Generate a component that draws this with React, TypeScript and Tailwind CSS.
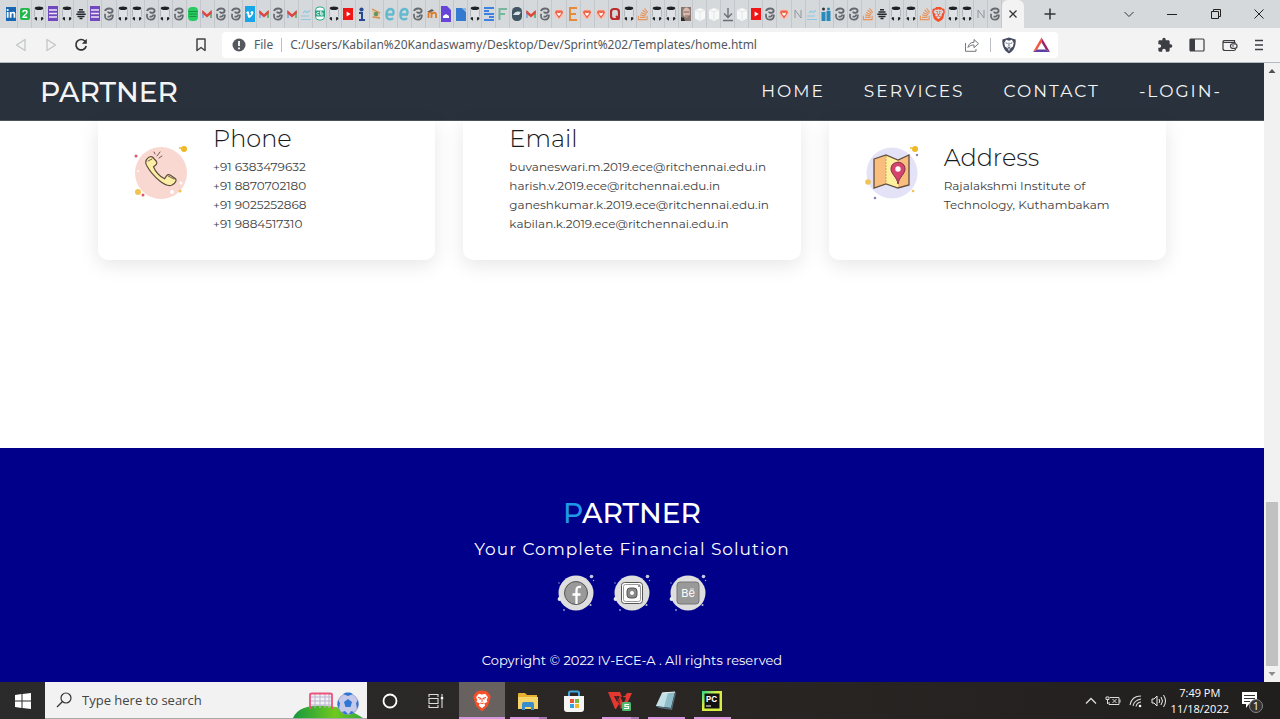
import React from "react";
import { SiBrave } from "react-icons/si";
import { FaStackOverflow, FaVimeoV, FaLinkedinIn } from "react-icons/fa";
import { MdExtension } from "react-icons/md";

type TabKind =
  | "in" | "two" | "cat" | "form" | "dots" | "swirl" | "spot" | "mail" | "vimeo" | "cloud" | "cb" | "play"
  | "info" | "eye" | "edge" | "moodle" | "pdoc" | "bdoc" | "s" | "f" | "orb" | "lion" | "lionLight" | "e"
  | "q" | "so" | "face" | "box" | "down" | "n" | "ii";

const TABS: TabKind[] = [
  "in", "two", "cat", "form", "cat", "dots", "form", "swirl", "cat", "cat", "swirl", "cat", "swirl", "spot",
  "mail", "swirl", "swirl", "vimeo", "mail", "swirl", "mail", "cloud", "cb", "cat", "play", "info", "eye",
  "edge", "edge", "swirl", "moodle", "pdoc", "bdoc", "cat", "s", "f", "orb", "mail", "swirl", "lionLight",
  "e", "lionLight", "lionLight", "q", "cat", "so", "cat", "cat", "face", "box", "box", "down", "box", "play",
  "swirl", "lionLight", "n", "cloud", "ii", "swirl", "swirl", "so", "dots", "cat", "cat", "so", "lion",
  "cat", "cat", "n", "swirl",
];

function Favicon({ kind }: { kind: TabKind }) {
  const frame = (children: React.ReactNode) => (
    <svg viewBox="0 0 10 16" className="h-4 w-2.5 shrink-0" aria-hidden="true">{children}</svg>
  );
  switch (kind) {
    case "in":
      return <span className="flex h-3.5 w-2.5 items-center justify-center bg-[#1767b3] text-white"><FaLinkedinIn size={10} /></span>;
    case "vimeo":
      return <span className="flex h-4 w-2.5 items-center justify-center bg-[#17a6e8] text-white"><FaVimeoV size={9} /></span>;
    case "so":
      return <FaStackOverflow size={14} className="shrink-0 text-[#e8935a]" />;
    case "lion":
      return <SiBrave size={15} className="shrink-0 text-[#f4502a]" />;
    case "two":
      return frame(<><rect y="2" width="10" height="12" rx="2" fill="#22b84b" /><path d="M3 6.2C3 4 7 4 7 6.2S3 9.5 3 11.2h4.2" fill="none" stroke="#fff" strokeWidth="1.4" /></>);
    case "cat":
      return frame(<><path d="M.6 3.500v7M9.400 3.500v7" stroke="#a5aaae" strokeWidth=".8" /><rect x="1.200" y="3" width="7.600" height="8" fill="#dfe2e5" /><ellipse cx="5" cy="2.300" rx="4.300" ry="1.800" fill="#1e2226" /><path d="M1 11.300h2v3.500L.5 13ZM7 11.300h2l.5 1.700L7 14.800Z" fill="#1e2226" /></>);
    case "form":
      return frame(<><rect width="10" height="15" fill="#7248bd" /><path d="M1 4h8M1 7.5h8M1 11h8" stroke="#eee5fa" strokeWidth="1.5" /></>);
    case "dots":
      return frame(<path d="M3 3.800h4M1.500 6h7M.3 8.200h9.400M1.500 10.400h7M3.500 12.600h3" stroke="#22272b" strokeWidth="1.500" />);
    case "swirl":
      return frame(<><path d="M1 5C1.800 1.800 8.800 1.500 8.600 4.800 8.500 7.500 4 7.500 4.200 5.500" fill="none" stroke="#65696e" strokeWidth="1.900" /><path d="M1.200 7.800C.2 12.500 2.500 13.800 5 13.700S9.200 12 8.800 8.500M3.500 10.500C5 11 7 10.500 7.500 8.500" fill="none" stroke="#65696e" strokeWidth="1.700" /></>);
    case "spot":
      return frame(<><rect y="1" width="10" height="14" rx="4" fill="#28cb61" /><path d="M.5 5.5h9M1 8h8M1.5 10.5h7" stroke="#159343" /></>);
    case "mail":
      return frame(<><path d="M1 5v7" stroke="#86ace5" strokeWidth="1.8" /><path d="M9 5v7" stroke="#60b079" strokeWidth="1.8" /><path d="m.3 4 4.7 4.2L9.7 4v3.5L5 11.5.3 7.5Z" fill="#df473d" /></>);
    case "cloud":
      return frame(<path d="M0 10h8M0 13.5h10M2 7l2-2 2 1.5 3-2" fill="none" stroke="#91c8e5" strokeWidth="1.2" />);
    case "cb":
      return frame(<><rect x=".5" y="1" width="9" height="13" rx="3.5" fill="#fff" stroke="#2aa982" /><rect y="4.5" width="10" height="6" fill="#24a882" /><path d="M4.2 6.5C1 5.5 1 9.8 4.2 8.8M5.8 5v4c3 .8 3-2.8 0-2" fill="none" stroke="#fff" /></>);
    case "play":
      return frame(<><rect y="2" width="10" height="12" fill="#f01616" /><path d="m3.6 5.5 4 2.5-4 2.5Z" fill="#fff" /></>);
    case "info":
      return frame(<><circle cx="4.5" cy="3.5" r="2.1" fill="#244a93" /><path d="M2 7h3v7M2 14h6" fill="none" stroke="#244a93" strokeWidth="2" /></>);
    case "eye":
      return frame(<><path d="M1 2.500 9 6 8 13 2 11Z" fill="#dfc5a5" /><path d="M1 3 9 7M1.500 11 9 12" stroke="#d8904e" strokeWidth="1.3" /><circle cx="5" cy="8" r="2.200" fill="#63965b" /></>);
    case "edge":
      return frame(<path d="M2.500 8.500h5.500C9.500 5 7.500 2.500 5 3S1.200 6 1.500 10s5 4 6.500 2" fill="none" stroke="#63b9ce" strokeWidth="2.400" />);
    case "moodle":
      return frame(<><path d="M1.5 12V7.5c1-2 3-1.500 3 .5v4M5 8c1-2 4-1.500 4 .5V12" fill="none" stroke="#dc7d2d" strokeWidth="1.8" /><path d="m0 6 5-3 2 2-5 1Z" fill="#555" /></>);
    case "pdoc":
      return frame(<><path d="M0 0h6l4 4v12H0Z" fill="#6546d8" /><path d="M2 12v-2l3-2 3 2v2Z" fill="#fff" /></>);
    case "bdoc":
      return frame(<><path d="M0 2h6l4 4v9H0Z" fill="#337bd0" /><path d="m6 2 4 4V2Z" fill="#8cb6e8" /></>);
    case "s":
      return frame(<path d="M0 2h10M0 5h5M0 8h10M5 11h5M0 14h10" stroke="#3d82e3" strokeWidth="2" />);
    case "f":
      return frame(<path d="M1.5 14V3H9M1.500 8H7" fill="none" stroke="#79b79c" strokeWidth="2" />);
    case "orb":
      return frame(<><rect y="1" width="10" height="14" rx="4.5" fill="#405663" /><path d="M1 9c2-4 5-4 8-3L7 9Z" fill="#dbe5e9" /></>);
    case "lionLight":
      return frame(<><circle cx="5" cy="8" r="5" fill="#f2c8bd" /><path d="M1.800 4.500h6.400l.8 2.300L5 12.500 1 6.800Z" fill="#ee6247" /><path d="m3 6.500 2 .8 2-.8-.5 2L5 10 3.500 8.500Z" fill="#fff" /></>);
    case "e":
      return frame(<path d="M9 2H2v12h7M2 8h6" fill="none" stroke="#e58b3a" strokeWidth="2" />);
    case "q":
      return frame(<><rect x="1" y="3" width="8" height="10" rx="3" fill="none" stroke="#b92b2d" strokeWidth="2.2" /><path d="m6 10 3.500 3.500" stroke="#b92b2d" strokeWidth="2" /></>);
    case "face":
      return frame(<><rect y="1" width="10" height="14" fill="#86766f" /><ellipse cx="5.500" cy="6.500" rx="3.700" ry="5" fill="#dab8ae" /><path d="M2.500 6h6M4 10h4" stroke="#6d5b55" strokeWidth=".9" /><path d="M0 15v-4l3 1 1 3Z" fill="#282b2c" /></>);
    case "box":
      return frame(<><path d="m0 4 5-2 5 2v8.500L5 15l-5-2.500Z" fill="#f7f8f8" /><path d="m0 4 5 2 5-2M5 6v8" fill="none" stroke="#dce0e2" strokeWidth=".7" /></>);
    case "down":
      return frame(<path d="M5 2v9M1 7.500l4 4 4-4M0 14.500h10" fill="none" stroke="#697078" strokeWidth="1.400" />);
    case "n":
      return frame(<path d="M2 12V4l6 8V4" fill="none" stroke="#8f969b" />);
    case "ii":
      return frame(<><path d="M2.500 6v9M7.500 5v10" stroke="#278abb" strokeWidth="4" /><circle cx="2.500" cy="3" r="1.500" fill="#333" /><circle cx="7.500" cy="3" r="1.500" fill="#278abb" /></>);
  }
}

function TabStrip() {
  return (
    <div className="flex h-7 items-end bg-[#d5d9dc] pl-1">
      <div className="flex min-w-0 flex-[998] items-center">
        {TABS.map((kind, i) => (
          <button key={i} type="button" aria-label={`Tab ${i + 1}`} className="flex h-7 min-w-0 flex-1 items-center justify-center overflow-hidden border-r border-[#c4c8cc]">
            <Favicon kind={kind} />
          </button>
        ))}
      </div>
      <button type="button" aria-label="Close tab" className="flex h-7 w-[22px] items-center justify-center rounded-t-md bg-[#f3f3f3]">
        <svg viewBox="0 0 8 8" className="size-2"><path d="m.5.5 7 7m0-7-7 7" stroke="#333" strokeWidth="1.300" /></svg>
      </button>
      <div className="flex h-7 flex-[256] items-center">
        <button type="button" aria-label="New tab" className="flex w-[52px] justify-center">
          <svg viewBox="0 0 12 12" className="size-3"><path d="M6 .5v11M.5 6h11" stroke="#333" strokeWidth="1.500" /></svg>
        </button>
        <div className="flex flex-1 justify-between pr-4 pl-12">
          <button type="button" aria-label="Search tabs"><svg viewBox="0 0 10 10" className="size-2.5"><path d="m.5 3 4.500 4.500L9.500 3" fill="none" stroke="#333" /></svg></button>
          <button type="button" aria-label="Minimize"><svg viewBox="0 0 10 10" className="size-2.5"><path d="M0 5.500h10" stroke="#222" /></svg></button>
          <button type="button" aria-label="Restore"><svg viewBox="0 0 10 10" className="size-2.5"><path d="M.5 2.500h7v7h-7ZM2.500 2.500v-2h7v7h-2" fill="none" stroke="#222" /></svg></button>
          <button type="button" aria-label="Close window"><svg viewBox="0 0 10 10" className="size-2.5"><path d="m.5.5 9 9m0-9-9 9" stroke="#222" /></svg></button>
        </div>
      </div>
    </div>
  );
}

function Toolbar() {
  return (
    <div className="flex h-[35px] items-center border-b border-[#b4bac1] bg-[#f3f3f3] pr-4 pl-[15px]">
      <div className="flex w-[73px] items-center justify-between">
        <button type="button" aria-label="Back"><svg viewBox="0 0 12 14" className="h-3.5 w-3"><path d="M10 1.500v11L1.500 7Z" fill="none" stroke="#c3c5c7" strokeWidth="1.300" strokeLinejoin="round" /></svg></button>
        <button type="button" aria-label="Forward"><svg viewBox="0 0 12 14" className="h-3.5 w-3"><path d="M2 1.500v11L10.500 7Z" fill="none" stroke="#c3c5c7" strokeWidth="1.300" strokeLinejoin="round" /></svg></button>
        <button type="button" aria-label="Reload"><svg viewBox="0 0 14 14" className="size-3.5"><path d="M11 3.200A5.200 5.200 0 1 0 12.200 8" fill="none" stroke="#333" strokeWidth="1.700" /><path d="M12.800.8v5H7.900Z" fill="#333" /></svg></button>
      </div>
      <button type="button" aria-label="Bookmark" className="ml-[108px]"><svg viewBox="0 0 10 14" className="h-3.5 w-2.5"><path d="M1 1h8v11.500L5 9.500l-4 3Z" fill="none" stroke="#444" strokeWidth="1.500" strokeLinejoin="round" /></svg></button>
      <div className="ml-4 flex h-[26px] flex-1 items-center rounded bg-white pr-2 pl-2.5 font-['Noto_Sans',sans-serif] text-xs text-[#54585d]">
        <svg viewBox="0 0 14 14" className="size-3.5"><circle cx="7" cy="7" r="6.500" fill="#55595f" /><path d="M7 3v5M7 9.500v1.700" stroke="#fff" strokeWidth="1.800" /></svg>
        <span className="ml-2">File</span>
        <span className="mx-2 h-3.5 w-px bg-[#babdc1]" />
        <input aria-label="Address bar" readOnly value="C:/Users/Kabilan%20Kandaswamy/Desktop/Dev/Sprint%202/Templates/home.html" className="min-w-0 flex-1 bg-transparent outline-none" />
        <button type="button" aria-label="Share"><svg viewBox="0 0 16 14" className="h-3.5 w-4"><path d="M1.500 5v8.300h10.500V11" fill="none" stroke="#74777b" /><path d="M4 9.500C4.500 6 7 4.300 10 4.300V1.500l4.500 4.200L10 9.700V7C7.500 7 5.500 7.500 4 9.500Z" fill="none" stroke="#74777b" strokeLinejoin="round" /></svg></button>
        <span className="mx-2.5 h-3.5 w-px bg-[#babdc1]" />
        <button type="button" aria-label="Brave shields">
          <svg viewBox="0 0 16 18" className="h-[17px] w-4"><path d="M8 .5 15 2.700c.5 6-1.500 12-7 14.800C2.500 14.700.5 8.700 1 2.700Z" fill="#464b60" /><path d="m5 3 3 1 3-1 2 3-.8 4L9.500 12 8 15l-1.500-3-2.700-2L3 6Z" fill="#fff" /><path d="m4.500 6 2 1m5-1-2 1M8 6v4m-1.500.5 1.500.8 1.500-.8m-2.500 2h2" fill="none" stroke="#464b60" strokeWidth=".9" /></svg>
        </button>
        <button type="button" aria-label="Rewards" className="ml-4">
          <svg viewBox="0 0 18 16" className="h-4 w-[17px]"><path d="M9 0 0 15.500l4.500-2.700L9 5Z" fill="#f1573f" /><path d="m9 0 9 15.500-4.500-2.700L9 5Z" fill="#9b216b" /><path d="M0 15.500h18l-4.500-2.700h-9Z" fill="#5c3f9e" /></svg>
        </button>
      </div>
      <div className="ml-[99px] flex w-[107px] items-center justify-between text-[#3c3e43]">
        <button type="button" aria-label="Extensions"><MdExtension size={16} /></button>
        <button type="button" aria-label="Side panel"><svg viewBox="0 0 16 14" className="h-3.5 w-4"><rect x="1" y="1" width="14" height="12" rx="1" fill="none" stroke="currentColor" strokeWidth="1.200" /><path d="M1 1h5v12H1Z" fill="currentColor" /></svg></button>
        <button type="button" aria-label="Wallet"><svg viewBox="0 0 16 14" className="h-3.5 w-4"><path d="M12.500 4V2.500h-10a1.500 1.500 0 0 0-1.500 1v7C1 12 1.700 12.500 3 12.500h8.500c1.300 0 2-.5 2-1.500M1.500 4.300H12c1 0 1.500.4 1.500 1.200" fill="none" stroke="currentColor" strokeWidth="1.200" /><rect x="8.500" y="5.800" width="6.500" height="4.500" rx="2" fill="#f3f3f3" stroke="currentColor" strokeWidth="1.200" /><circle cx="11" cy="8" r=".8" fill="currentColor" /></svg></button>
        <button type="button" aria-label="Menu"><svg viewBox="0 0 10 12" className="h-3 w-2.5"><path d="M1 1.500h8M1 6h8M1 10.500h8" stroke="currentColor" strokeWidth="1.300" /></svg></button>
      </div>
    </div>
  );
}

function PhoneArt() {
  return (
    <svg viewBox="0 0 56 56" className="size-14 shrink-0" aria-hidden="true">
      <circle cx="28" cy="29" r="26" fill="#f8d8d0" />
      <circle cx="51" cy="5" r="3" fill="#efb825" /><circle cx="47" cy="4" r="1" fill="#efb825" />
      <circle cx="3" cy="12" r="1.500" fill="#e0566c" /><circle cx="5" cy="48" r="3" fill="#f1c351" />
      <circle cx="10" cy="51" r="1.500" fill="#e0566c" /><circle cx="47" cy="47" r="1.600" fill="#f1c351" />
      <circle cx="39" cy="48" r="2" fill="#fff" /><circle cx="48" cy="39" r="1.500" fill="#fff" /><circle cx="5" cy="27" r="1" fill="#fff" />
      <path d="M14 15c2-2.500 4.500-3 6-1.500l3.500 4c1 1.500.2 2.800-2 4.500l-1 .8c2 5 6 9.500 11 12l2-3c1.300-1.500 2.500-1.500 4-.5l5 3.500c1.700 1.500-.2 4.500-4 6.500-3 1-7-.5-12-4.500-6-5-10-10-13-15.500-1.500-3-1-4.500.5-6.300Z" fill="#fdeea5" stroke="#604e3e" strokeWidth="1.200" strokeLinejoin="round" />
      <path d="m15 17 4-2m16 17 6 3M22 10l-1-2m3 4 3-4m-1 6 3-2" fill="none" stroke="#7b5b57" strokeLinecap="round" />
    </svg>
  );
}

function MapArt() {
  return (
    <svg viewBox="0 0 56 56" className="size-14 shrink-0" aria-hidden="true">
      <circle cx="28" cy="29" r="25.500" fill="#e3e2f6" />
      <circle cx="51" cy="5" r="3" fill="#efb825" /><circle cx="47" cy="4" r="1" fill="#efb825" /><circle cx="53" cy="11" r="1.200" fill="#8b81ba" />
      <circle cx="4" cy="38" r="2.800" fill="#f1c351" /><circle cx="11" cy="54" r="1.300" fill="#8b81ba" /><circle cx="49" cy="47" r="1.300" fill="#f1c351" />
      <path d="m10 15 12-4v29l-12 4Z" fill="#f9bd7e" /><path d="m22 11 12 5v28l-12-4Z" fill="#fff09f" /><path d="m34 16 11-5v30l-11 3Z" fill="#f9bd7e" />
      <path d="m10 15 12-4 12 5 11-5v30l-11 3-12-4-12 4Z" fill="none" stroke="#604e3e" strokeWidth="1.300" /><path d="M22 12v27" stroke="#c5a55e" strokeDasharray="2 1" />
      <path d="M34 40C33 33 27 30 27 25c0-9 14-9 14 0 0 5-6 8-7 15Z" fill="#d4446d" stroke="#7c3048" /><circle cx="34" cy="25" r="2.700" fill="#fff" />
    </svg>
  );
}

function ContactCard({ art, title, lines, wide }: { art?: React.ReactNode; title: string; lines: string[]; wide?: boolean }) {
  return (
    <article className={`flex min-w-0 items-center rounded-b-[10px] bg-white pb-[27px] shadow-[0_5px_20px_rgba(0,0,0,0.1)] ${wide ? "pl-[46px]" : "pl-[35px]"}`}>
      {art && <div className="mr-6 pb-2.5">{art}</div>}
      <div className="min-w-0">
        <h2 className="text-2xl leading-9 font-light text-[#17191b]">{title}</h2>
        {lines.map((line) => (
          <p key={line} className="text-[12px] leading-[19px] whitespace-nowrap text-[#3c3e42]">{line}</p>
        ))}
      </div>
    </article>
  );
}

function SocialArt({ kind }: { kind: "facebook" | "instagram" | "behance" }) {
  return (
    <svg viewBox="0 0 40 40" className="size-10" aria-hidden="true">
      <circle cx="20" cy="21" r="17.500" fill="#dedede" />
      <circle cx="35.500" cy="4.500" r="1.800" fill="#c8c9df" /><circle cx="37.500" cy="8.500" r=".7" fill="#aeb0d5" /><circle cx="3" cy="11" r=".8" fill="#8f91c0" />
      <circle cx="3.500" cy="27" r="1.900" fill="#e7e7ef" /><circle cx="8" cy="38" r="1" fill="#8f91c0" /><circle cx="34.500" cy="33" r="1.100" fill="#b7b8d4" />
      {kind === "facebook" && <><circle cx="20" cy="21" r="11.500" fill="#999" stroke="#555" /><path d="M20.500 32V18.500c0-3 1.500-4 4.500-3.500M16.500 22.500h8" fill="none" stroke="#fff" strokeWidth="2.300" /></>}
      {kind === "instagram" && <><rect x="9.500" y="10.500" width="21" height="21" rx="3" fill="#fff" stroke="#555" /><rect x="11.500" y="12.500" width="17" height="17" rx="2" fill="none" stroke="#999" /><rect x="15" y="16" width="10" height="10" rx="3" fill="#888" stroke="#555" /><circle cx="20" cy="21" r="2" fill="#fff" /><circle cx="27" cy="14" r="1" fill="#777" /></>}
      {kind === "behance" && <><rect x="9" y="10" width="22" height="22" rx="3" fill="#999" stroke="#777" /><text x="20" y="25" textAnchor="middle" fontFamily="Inter, sans-serif" fontSize="11" fill="#fff">Be</text><path d="M22 17h4" stroke="#eee" strokeWidth=".8" /></>}
    </svg>
  );
}

const NAV = ["HOME", "SERVICES", "CONTACT", "-LOGIN-"];

function Site() {
  return (
    <div className="flex min-w-0 flex-1 flex-col bg-white font-['Montserrat','Inter',sans-serif]">
      <header className="flex h-[58px] items-center justify-between border-b border-[#4b535b] bg-[#29313d] pr-[42px] pl-10 text-[#f4f4f4]">
        <a href="#home" className="text-[28px] leading-none font-medium">PARTNER</a>
        <nav aria-label="Main" className="flex gap-[39px] text-[17px] tracking-[2px]">
          {NAV.map((item) => <a key={item} href={`#${item.replaceAll("-", "").toLowerCase()}`}>{item}</a>)}
        </nav>
      </header>
      <main className="flex-1 px-[98px]">
        <section aria-label="Contact" className="grid grid-cols-3 gap-7">
          <ContactCard art={<PhoneArt />} title="Phone" lines={["+91 6383479632", "+91 8870702180", "+91 9025252868", "+91 9884517310"]} />
          <ContactCard wide title="Email" lines={["buvaneswari.m.2019.ece@ritchennai.edu.in", "harish.v.2019.ece@ritchennai.edu.in", "ganeshkumar.k.2019.ece@ritchennai.edu.in", "kabilan.k.2019.ece@ritchennai.edu.in"]} />
          <ContactCard art={<MapArt />} title="Address" lines={["Rajalakshmi Institute of", "Technology, Kuthambakam"]} />
        </section>
      </main>
      <footer className="flex flex-col items-center bg-[#00008b] pt-[49px] pb-3 text-white">
        <p className="text-[28px] leading-8 font-medium"><span className="text-[#1f98e6]">P</span>ARTNER</p>
        <p className="mt-2 text-[17px] leading-6 tracking-[1px]">Your Complete Financial Solution</p>
        <div className="mt-[11px] flex gap-4">
          <a href="#facebook" aria-label="Facebook"><SocialArt kind="facebook" /></a>
          <a href="#instagram" aria-label="Instagram"><SocialArt kind="instagram" /></a>
          <a href="#behance" aria-label="Behance"><SocialArt kind="behance" /></a>
        </div>
        <p className="mt-[38px] text-[13px] leading-5">Copyright © 2022 IV-ECE-A . All rights reserved</p>
      </footer>
    </div>
  );
}

function Scrollbar() {
  return (
    <div className="flex w-4 flex-col items-center bg-[#f1f1f1]" aria-hidden="true">
      <svg viewBox="0 0 16 16" className="size-4"><path d="m4.500 10 3.500-4 3.500 4Z" fill="#505050" /></svg>
      <div className="flex-[423]" />
      <div className="w-3 flex-[164] bg-[#c1c1c1]" />
      <svg viewBox="0 0 16 16" className="size-4"><path d="m4.500 6 3.500 4 3.500-4Z" fill="#8b8b8b" /></svg>
    </div>
  );
}

function TaskButton({ label, children, line, active, split }: { label: string; children: React.ReactNode; line?: boolean; active?: boolean; split?: boolean }) {
  return (
    <button type="button" aria-label={label} className={`flex h-full w-[46px] flex-col items-center ${active ? "bg-[#67615f]" : ""}`}>
      <span className="flex flex-1 items-center pt-0.5">{children}</span>
      <span className={`flex h-0.5 ${active ? "w-full" : "w-[37px]"} ${line ? "bg-[#d897df]" : ""}`}>
        {split && <span className="ml-auto w-2 bg-[#a878b2]" />}
      </span>
    </button>
  );
}

function Taskbar() {
  return (
    <div className="flex h-[37px] items-stretch bg-linear-to-r from-[#2b2b2c] via-[#2a2624] to-[#211f1e] text-white">
      <button type="button" aria-label="Start" className="flex w-[45px] items-center justify-center">
        <svg viewBox="0 0 16 16" className="size-4"><path d="m0 2 6.500-1v6.500H0Zm7.500-1L16 0v7.500H7.500ZM0 8.500h6.500V15L0 14Zm7.500 0H16V16l-8.500-1Z" fill="#fff" /></svg>
      </button>
      <div className="flex w-[322px] items-center border-b border-[#aaa] bg-[#f2f2f2] pl-[11px]">
        <svg viewBox="0 0 16 16" className="size-4" aria-hidden="true"><circle cx="10" cy="6" r="5" fill="none" stroke="#333" strokeWidth="1.200" /><path d="M6.500 9.500 1 15" stroke="#333" strokeWidth="1.300" /></svg>
        <input aria-label="Search" placeholder="Type here to search" className="ml-2.5 min-w-0 flex-1 bg-transparent pt-0.5 text-[13px] outline-none placeholder:text-[#444]" />
        <svg viewBox="0 0 74 36" className="h-9 w-[74px]" aria-hidden="true">
          <defs><linearGradient id="hill"><stop stopColor="#16983f" /><stop offset=".6" stopColor="#70c91e" /><stop offset="1" stopColor="#33a83c" /></linearGradient></defs>
          <path d="M0 36c5-12 20-13 34-12 15 1 25 5 36 12Z" fill="url(#hill)" />
          <path d="M18 15h20M18 19h20M18 23h20M22 12v14M27 12v14M32 12v14M36 12v14" stroke="#b9b4d4" />
          <path d="M17 27V13q0-1.500 2-1.500h18q2 0 2 1.500v14" fill="none" stroke="#e9547c" strokeWidth="1.800" />
          <circle cx="55" cy="22" r="10.500" fill="#c5c9ea" stroke="#8388bb" strokeWidth=".6" />
          <path d="m55 17 4 3-1.500 5h-5L51 20ZM50 12l5 2 5-2-3-1.500h-4ZM45 18l2 3-1 6-1.500-4ZM65 18l-2 3 1 6 1.500-4ZM49 30l3-1 3 3-3 .3Zm12 0-3-1-2 3h3Z" fill="#3176d4" />
        </svg>
      </div>
      <div className="flex flex-1">
        <TaskButton label="Cortana"><svg viewBox="0 0 16 16" className="size-4"><circle cx="8" cy="8" r="6.500" fill="none" stroke="#fff" strokeWidth="1.800" /></svg></TaskButton>
        <TaskButton label="Task view"><svg viewBox="0 0 16 16" className="size-4"><path d="M1 4V1.500h9V4M1 12v2.500h9V12M1 5.500h9v5H1ZM14 1v3M14 7v8" fill="none" stroke="#ddd" strokeWidth="1.100" /><path d="M12.800 4h2.400v2.500h-2.400Z" fill="#fff" /></svg></TaskButton>
        <TaskButton label="Brave" line active>
          <svg viewBox="0 0 20 24" className="h-[22px] w-5"><path d="m6 1 4-.5L14 1l2.500 1.500 1.500 2 1.500 2-.5 3-2.500 8L10 23.500l-6.500-6-2.500-8-.5-3L2 4.500l1.500-2Z" fill="#f4502a" /><path d="m6.500 4 3.500 1 3.500-1 3 4-1.500 3 1 2-3.500 1.500 1 2.500-3.500 3-3.500-3 1-2.500L4 13l1-2-1.500-3Z" fill="#fff" /><path d="m5.500 8 3 1-1 1.500m7-2.500-3 1 1 1.500M10 9v4m-2 1 2 1 2-1" fill="none" stroke="#f4502a" strokeWidth="1.100" /></svg>
        </TaskButton>
        <TaskButton label="File Explorer" line split><svg viewBox="0 0 20 18" className="h-[18px] w-5"><path d="M0 2q0-1 1-1h6l2 2h10v14H0Z" fill="#e8b130" /><path d="M0 5h20v12H0Z" fill="#f8d569" /><path d="M4 18v-6q0-2 2-2h8q2 0 2 2v6h-3v-3H7v3Z" fill="#388fcc" /></svg></TaskButton>
        <TaskButton label="Store"><svg viewBox="0 0 22 22" className="size-[22px]"><path d="M6 7V3q0-1.500 1.500-1.500h7Q16 1.500 16 3v4" fill="none" stroke="#3fa7dd" strokeWidth="2" /><path d="M1 6h20v13q0 3-3 3H4q-3 0-3-3Z" fill="#f5f5f5" /><path d="M7 9h4v4H7Z" fill="#e75434" /><path d="M12 9h4v4h-4Z" fill="#78b83b" /><path d="M7 14h4v4H7Z" fill="#35a1df" /><path d="M12 14h4v4h-4Z" fill="#f2b72e" /></svg></TaskButton>
        <TaskButton label="WPS Office" line split><svg viewBox="0 0 24 20" className="h-5 w-6"><path d="M0 1h12l2 5-4-1H6l3 6 3-6 4 9-3 4-2-5-3 5H7Z" fill="#e43831" /><path d="M14 5h3l2-3h5l-6 13-3-1 3-7Z" fill="#e43831" /><path d="m8 5 5 11M10 12l2-4" stroke="#82201e" /><rect x="14" y="11" width="9" height="9" rx="1.500" fill="#50b96d" /><path d="M21 13.500h-4v2h3.500v2H16" fill="none" stroke="#fff" strokeWidth="1.200" /></svg></TaskButton>
        <TaskButton label="Notepad" line><svg viewBox="0 0 20 20" className="size-5"><path d="m6 2 13-1-4 16-15-2Z" fill="#8ebdca" /><path d="m6 2 6-.5L8 16l-8-1Z" fill="#c3e0e5" /><path d="m0 15 15 2 4-16 1 1-4 17L3 17Z" fill="#536974" /><path d="m6 2 13-1" stroke="#eff5f6" /></svg></TaskButton>
        <TaskButton label="PyCharm" line><svg viewBox="0 0 20 20" className="size-5"><defs><linearGradient id="pycharm" x2="1" y2="1"><stop stopColor="#24d987" /><stop offset=".4" stopColor="#d8ee45" /></linearGradient></defs><path d="M0 0h20v20H0Z" fill="url(#pycharm)" /><path d="M2.500 2.500h15v15h-15Z" fill="#111" /><text x="4" y="10.500" fontFamily="Inter, sans-serif" fontSize="8" fontWeight="700" fill="#fff">PC</text><path d="M4 15h5" stroke="#fff" /></svg></TaskButton>
      </div>
      <div className="flex items-center gap-2 pr-[15px]">
        <svg viewBox="0 0 12 12" className="size-3"><path d="m1 8.500 5-5 5 5" fill="none" stroke="#ddd" strokeWidth="1.300" /></svg>
        <svg viewBox="0 0 16 12" className="h-3 w-4"><path d="M5 2.500h9v7H4V7M15 4.500v3M7.500 4l4 4m0-4-4 4M2.500 5v4M1 2h3v2.500H1Z" fill="none" stroke="#ddd" /></svg>
        <svg viewBox="0 0 14 14" className="size-3.5"><path d="M1 11C2 5.500 6 2 12 2M4 12c.5-3.500 3-6 8-7M7 12.500C7.500 10 9 8.500 12 8" fill="none" stroke="#ddd" strokeWidth="1.100" /><circle cx="11" cy="12" r="1.300" fill="#fff" /></svg>
        <svg viewBox="0 0 16 14" className="h-3.5 w-4"><path d="M1 5h2l3-3v10L3 9H1ZM8 5q1.500 2 0 4m2-6q3 4 0 8m2.500-10q4 6 0 12" fill="none" stroke="#eee" /></svg>
        <div className="-ml-1 text-center text-[11px] leading-4"><div>7:49 PM</div><div>11/18/2022</div></div>
        <button type="button" aria-label="1 notification" className="ml-1 size-6">
          <svg viewBox="0 0 24 24" className="size-6"><path d="M1 3h15v12H8l-3 4v-4H1Z" fill="#fff" /><path d="M3 6.500h11M3 9.500h11M3 12.500h6" stroke="#333" /><circle cx="15" cy="17" r="6.500" fill="#333" stroke="#888" /><text x="15" y="21" textAnchor="middle" fontFamily="Open Sans, sans-serif" fontSize="11" fill="#fff">1</text></svg>
        </button>
      </div>
    </div>
  );
}

export default function App() {
  return (
    <div className="flex min-h-screen flex-col font-['Open_Sans',sans-serif]">
      <TabStrip />
      <Toolbar />
      <div className="flex flex-1">
        <Site />
        <Scrollbar />
      </div>
      <Taskbar />
    </div>
  );
}
